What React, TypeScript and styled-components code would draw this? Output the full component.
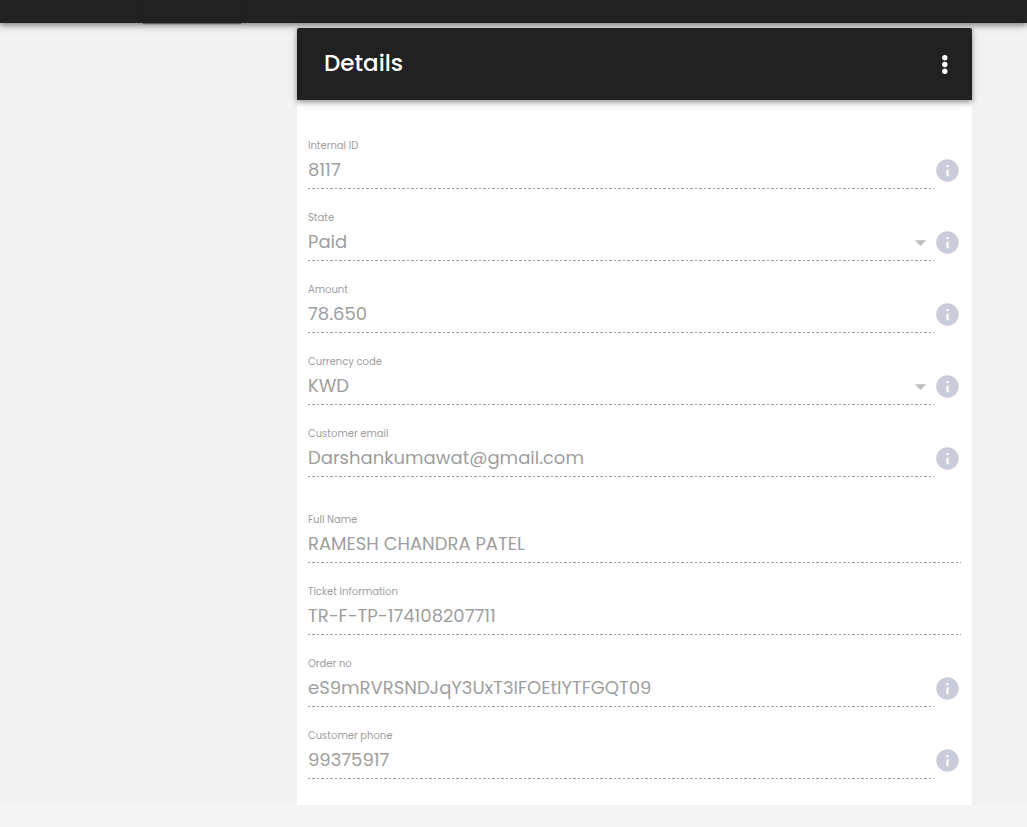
import React, { useId } from "react";
import styled, { createGlobalStyle } from "styled-components";
import { MdArrowDropDown, MdInfo } from "react-icons/md";

const GlobalStyle = createGlobalStyle`
  * { box-sizing: border-box; }
  body {
    margin: 0;
    background: #f4f4f4;
    font-family: Poppins, Inter, "Liberation Sans", sans-serif;
  }
`;

const TopBar = styled.header`
  position: relative;
  z-index: 1;
  height: 23px;
  background: #212121;
  box-shadow: 0 2px 5px rgba(0, 0, 0, 0.4), 0 4px 10px rgba(0, 0, 0, 0.12);
`;

const ActiveTab = styled.div`
  width: 98px;
  height: 100%;
  margin-left: 143px;
  box-shadow: 0 1px 1px rgba(0, 0, 0, 0.4);
`;

const Content = styled.main`
  padding: 5px 55px 0 297px;
  background: #f2f2f2;
`;

const Card = styled.section`
  background: #fff;
  border-radius: 2px 2px 0 0;
`;

const CardHeader = styled.div`
  position: relative;
  z-index: 2;
  display: flex;
  align-items: center;
  justify-content: space-between;
  height: 72px;
  padding: 0 14px 0 27px;
  border-radius: 2px 2px 0 0;
  background: #212121;
  color: #fff;
  box-shadow: 0 2px 5px rgba(0, 0, 0, 0.35), 0 3px 8px rgba(0, 0, 0, 0.12);
`;

const Title = styled.h1`
  margin: 0;
  padding-bottom: 2px;
  font-size: 23px;
  line-height: 30px;
  font-weight: 500;
`;

const IconButton = styled.button`
  display: flex;
  flex: none;
  padding: 0;
  border: 0;
  background: none;
  color: inherit;
`;

const Form = styled.form`
  display: flex;
  flex-direction: column;
  gap: 14px;
  padding: 30px 11px 13px;
`;

const Row = styled.div`
  display: flex;
  align-items: flex-start;
  height: 72px;
  padding-top: 9px;
`;

const Group = styled.div``;

const Field = styled.div`
  position: relative;
  flex: 1;
  min-width: 0;
  height: 50px;
  background: repeating-linear-gradient(
      to right,
      #a0a0a0 0 2px,
      transparent 2px 4px,
      #a0a0a0 4px 7px,
      transparent 7px 9px
    )
    bottom / 100% 1px no-repeat;
`;

const Label = styled.label`
  display: block;
  font-size: 10px;
  line-height: 14px;
  font-weight: 400;
  color: #9e9e9e;
`;

const Input = styled.input`
  display: block;
  width: 100%;
  height: 32px;
  padding: 0;
  border: 0;
  background: none;
  font-family: inherit;
  font-size: 18px;
  font-weight: 400;
  color: #9e9e9e;
  opacity: 1;
`;

const Select = styled(Input).attrs({ as: "select" })`
  appearance: none;
`;

const Arrow = styled(MdArrowDropDown)`
  position: absolute;
  right: 0;
  bottom: 5px;
  color: #bdbdbd;
  pointer-events: none;
`;

const InfoButton = styled(IconButton)`
  padding-top: 18px;
  color: #c9ccda;
`;

type FieldData = { label: string; value: string; select?: boolean; info?: boolean };

const groups: FieldData[][] = [
  [
    { label: "Internal ID", value: "8117", info: true },
    { label: "State", value: "Paid", select: true, info: true },
    { label: "Amount", value: "78.650", info: true },
    { label: "Currency code", value: "KWD", select: true, info: true },
    { label: "Customer email", value: "Darshankumawat@gmail.com", info: true },
  ],
  [
    { label: "Full Name", value: "RAMESH CHANDRA PATEL" },
    { label: "Ticket Information", value: "TR-F-TP-174108207711" },
    { label: "Order no", value: "eS9mRVRSNDJqY3UxT3lFOEtlYTFGQT09", info: true },
    { label: "Customer phone", value: "99375917", info: true },
  ],
];

function MoreIcon() {
  return (
    <svg width="27" height="27" viewBox="0 0 27 27" fill="currentColor" aria-hidden="true">
      <circle cx="13.8" cy="6.7" r="2.7" />
      <circle cx="13.8" cy="13.5" r="2.7" />
      <circle cx="13.8" cy="20.3" r="2.7" />
    </svg>
  );
}

function DetailRow({ label, value, select, info }: FieldData) {
  const id = useId();
  return (
    <Row>
      <Field>
        <Label htmlFor={id}>{label}</Label>
        {select ? (
          <>
            <Select id={id} defaultValue={value} disabled>
              <option>{value}</option>
            </Select>
            <Arrow size={27} />
          </>
        ) : (
          <Input id={id} defaultValue={value} disabled />
        )}
      </Field>
      {info && (
        <InfoButton type="button" aria-label={`About ${label}`}>
          <MdInfo size={27} />
        </InfoButton>
      )}
    </Row>
  );
}

export default function App() {
  return (
    <>
      <GlobalStyle />
      <TopBar>
        <ActiveTab />
      </TopBar>
      <Content>
        <Card>
          <CardHeader>
            <Title>Details</Title>
            <IconButton type="button" aria-label="More actions">
              <MoreIcon />
            </IconButton>
          </CardHeader>
          <Form>
            {groups.map((fields, index) => (
              <Group key={index}>
                {fields.map((field) => (
                  <DetailRow key={field.label} {...field} />
                ))}
              </Group>
            ))}
          </Form>
        </Card>
      </Content>
    </>
  );
}
